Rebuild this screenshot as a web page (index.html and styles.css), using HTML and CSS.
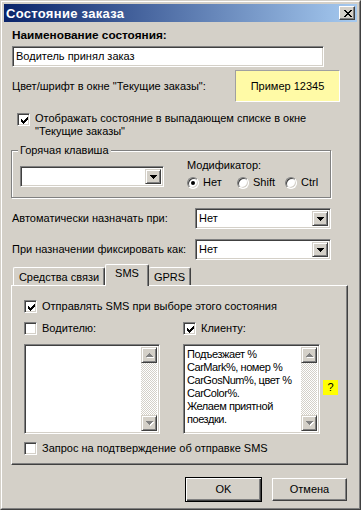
FILE: index.html
```html
<!DOCTYPE html>
<html lang="ru">
<head>
<meta charset="utf-8">
<title>Состояние заказа</title>
<link rel="stylesheet" href="styles.css">
</head>
<body>
<div class="window">
  <div class="frame">
    <div class="titlebar">
      <span class="title">Состояние заказа</span>
      <span class="close">
        <svg width="8" height="7" viewBox="0 0 8 7" shape-rendering="crispEdges"><path d="M0 0h2v1h1v1h2v-1h1v-1h2v1h-1v1h-1v1h-1v1h1v1h1v1h1v1h-2v-1h-1v-1h-2v1h-1v1h-2v-1h1v-1h1v-1h1v-1h-1v-1h-1z" fill="#000"/></svg>
      </span>
    </div>
    <div class="content">
      <div class="lbl-bold">Наименование состояния:</div>
      <div class="edit name-edit">Водитель принял заказ</div>

      <div class="color-row">
        <span>Цвет/шрифт в окне "Текущие заказы":</span>
        <div class="sample">Пример 12345</div>
      </div>

      <div class="check-row show-row">
        <span class="cb"><svg width="7" height="7" viewBox="0 0 7 7" shape-rendering="crispEdges"><path d="M6 0v1h-1v1h-1v1h-1v1h-1v-1h-1v-1h-1v3h1v1h1v1h1v-1h1v-1h1v-1h1v-1h1v-3z" fill="#000"/></svg></span>
        <span class="cb-text">Отображать состояние в выпадающем списке в окне<br>"Текущие заказы"</span>
      </div>

      <div class="group">
        <div class="legend">Горячая клавиша</div>
        <div class="combo hk-combo">
          <div class="combo-text"></div>
          <div class="combo-btn"><svg width="7" height="4" viewBox="0 0 7 4" shape-rendering="crispEdges"><path d="M0 0h7v1h-1v1h-1v1h-1v1h-1v-1h-1v-1h-1v-1h-1z" fill="#000"/></svg></div>
        </div>
        <div class="mods">
          <div class="mods-label">Модификатор:</div>
          <div class="radios">
            <span class="radio-item ri-1"><span class="radio on"></span><span>Нет</span></span>
            <span class="radio-item ri-2"><span class="radio"></span><span>Shift</span></span>
            <span class="radio-item"><span class="radio"></span><span>Ctrl</span></span>
          </div>
        </div>
      </div>

      <div class="field-row first-field">
        <span>Автоматически назначать при:</span>
        <div class="combo field-combo">
          <div class="combo-text">Нет</div>
          <div class="combo-btn"><svg width="7" height="4" viewBox="0 0 7 4" shape-rendering="crispEdges"><path d="M0 0h7v1h-1v1h-1v1h-1v1h-1v-1h-1v-1h-1v-1h-1z" fill="#000"/></svg></div>
        </div>
      </div>

      <div class="field-row second-field">
        <span>При назначении фиксировать как:</span>
        <div class="combo field-combo">
          <div class="combo-text">Нет</div>
          <div class="combo-btn"><svg width="7" height="4" viewBox="0 0 7 4" shape-rendering="crispEdges"><path d="M0 0h7v1h-1v1h-1v1h-1v1h-1v-1h-1v-1h-1v-1h-1z" fill="#000"/></svg></div>
        </div>
      </div>

      <div class="tabs">
        <div class="tab tab-1">Средства связи</div>
        <div class="tab tab-sel">SMS</div>
        <div class="tab tab-3">GPRS</div>
      </div>
      <div class="panel">
        <div class="check-row">
          <span class="cb"><svg width="7" height="7" viewBox="0 0 7 7" shape-rendering="crispEdges"><path d="M6 0v1h-1v1h-1v1h-1v1h-1v-1h-1v-1h-1v3h1v1h1v1h1v-1h1v-1h1v-1h1v-1h1v-3z" fill="#000"/></svg></span>
          <span class="cb-text">Отправлять SMS при выборе этого состояния</span>
        </div>
        <div class="cols">
          <div class="col">
            <div class="check-row">
              <span class="cb"></span>
              <span class="cb-text">Водителю:</span>
            </div>
            <div class="memo left-memo">
              <div class="memo-text"></div>
              <div class="vscroll">
                <div class="sbtn"><svg width="7" height="4" viewBox="0 0 7 4" shape-rendering="crispEdges"><path d="M3 0h1v1h1v1h1v1h1v1h-7v-1h1v-1h1v-1h1z" fill="#808080"/></svg></div>
                <div class="track"></div>
                <div class="sbtn"><svg width="7" height="4" viewBox="0 0 7 4" shape-rendering="crispEdges"><path d="M0 0h7v1h-1v1h-1v1h-1v1h-1v-1h-1v-1h-1v-1h-1z" fill="#808080"/></svg></div>
              </div>
            </div>
          </div>
          <div class="col right-col">
            <div class="check-row">
              <span class="cb"><svg width="7" height="7" viewBox="0 0 7 7" shape-rendering="crispEdges"><path d="M6 0v1h-1v1h-1v1h-1v1h-1v-1h-1v-1h-1v3h1v1h1v1h1v-1h1v-1h1v-1h1v-1h1v-3z" fill="#000"/></svg></span>
              <span class="cb-text">Клиенту:</span>
            </div>
            <div class="memo-wrap">
              <div class="memo right-memo">
                <div class="memo-text">Подъезжает %<br>CarMark%, номер %<br>CarGosNum%, цвет %<br>CarColor%.<br>Желаем приятной<br>поездки.</div>
                <div class="vscroll">
                  <div class="sbtn"><svg width="7" height="4" viewBox="0 0 7 4" shape-rendering="crispEdges"><path d="M3 0h1v1h1v1h1v1h1v1h-7v-1h1v-1h1v-1h1z" fill="#808080"/></svg></div>
                  <div class="track"></div>
                  <div class="sbtn"><svg width="7" height="4" viewBox="0 0 7 4" shape-rendering="crispEdges"><path d="M0 0h7v1h-1v1h-1v1h-1v1h-1v-1h-1v-1h-1v-1h-1z" fill="#808080"/></svg></div>
                </div>
              </div>
              <div class="help">?</div>
            </div>
          </div>
        </div>
        <div class="check-row confirm-row">
          <span class="cb"></span>
          <span class="cb-text">Запрос на подтверждение об отправке SMS</span>
        </div>
      </div>

      <div class="buttons">
        <div class="btn btn-default"><span>OK</span></div>
        <div class="btn">Отмена</div>
      </div>
    </div>
  </div>
</div>
</body>
</html>
```

FILE: styles.css
```css
html, body {
  margin: 0;
  padding: 0;
  background: #d4d0c8;
}

.window {
  width: 361px;
  height: 510px;
  box-sizing: border-box;
  border: 1px solid;
  border-color: #d4d0c8 #404040 #404040 #d4d0c8;
  font-family: "Liberation Sans", Arial, sans-serif;
  font-size: 11px;
  color: #000;
  background: #d4d0c8;
}

.frame {
  height: 100%;
  box-sizing: border-box;
  border: 1px solid;
  border-color: #fff #808080 #808080 #fff;
  padding: 2px;
  display: flex;
  flex-direction: column;
}

.titlebar {
  height: 18px;
  flex: none;
  display: flex;
  align-items: center;
  background: linear-gradient(to right, #0a246a, #a6caf0);
  padding: 0 2px 0 2px;
}

.title {
  color: #fff;
  font-weight: bold;
  font-size: 13px;
  letter-spacing: 0.3px;
  flex: 1;
}

.close {
  width: 16px;
  height: 14px;
  box-sizing: border-box;
  border: 1px solid;
  border-color: #fff #404040 #404040 #fff;
  box-shadow: inset -1px -1px #808080;
  background: #d4d0c8;
  display: flex;
  align-items: center;
  justify-content: center;
  padding-left: 1px;
}

.content {
  flex: 1;
  padding: 7px 0 0 8px;
  line-height: 13px;
}

.lbl-bold {
  font-weight: bold;
  font-size: 11.8px;
  height: 13px;
}

.edit {
  background: #fff;
  border: 1px solid;
  border-color: #808080 #fff #fff #808080;
  box-shadow: inset 1px 1px #404040, inset -1px -1px #d4d0c8;
  box-sizing: border-box;
}

.name-edit {
  margin-top: 4px;
  width: 312px;
  height: 21px;
  padding: 3px 0 0 3px;
  white-space: nowrap;
}

.color-row {
  margin-top: 3px;
  width: 328px;
  height: 32px;
  display: flex;
  align-items: center;
  justify-content: space-between;
}

.sample {
  width: 105px;
  height: 32px;
  box-sizing: border-box;
  background: #fffaa6;
  border: 1px solid;
  border-color: #a0a0a0 #fff #fff #a0a0a0;
  display: flex;
  align-items: center;
  justify-content: center;
}

.check-row {
  display: flex;
  align-items: flex-start;
  height: 13px;
}

.cb {
  width: 13px;
  height: 13px;
  flex: none;
  box-sizing: border-box;
  background: #fff;
  border: 1px solid;
  border-color: #808080 #fff #fff #808080;
  box-shadow: inset 1px 1px #404040, inset -1px -1px #d4d0c8;
  display: flex;
  align-items: center;
  justify-content: center;
  padding: 1px 0 0 1px;
}

.cb-text {
  margin-left: 5px;
  white-space: nowrap;
}

.show-row {
  margin-top: 10px;
  margin-left: 5px;
  height: 26px;
}

.show-row .cb {
  margin-top: 1px;
}

.group {
  position: relative;
  margin-top: 12px;
  margin-left: -1px;
  width: 320px;
  height: 48px;
  box-sizing: border-box;
  border: 1px solid #808080;
  box-shadow: inset 1px 1px #fff, 1px 1px #fff;
  display: flex;
  align-items: flex-start;
  padding-left: 8px;
}

.legend {
  position: absolute;
  left: 6px;
  top: -7px;
  padding: 0 2px;
  background: #d4d0c8;
}

.combo {
  display: flex;
  box-sizing: border-box;
  background: #fff;
  border: 1px solid;
  border-color: #808080 #fff #fff #808080;
  box-shadow: inset 1px 1px #404040, inset -1px -1px #d4d0c8;
  padding: 2px;
}

.combo-text {
  flex: 1;
  padding-left: 1px;
  line-height: 15px;
}

.combo-btn {
  width: 16px;
  box-sizing: border-box;
  background: #d4d0c8;
  border: 1px solid;
  border-color: #d4d0c8 #404040 #404040 #d4d0c8;
  box-shadow: inset 1px 1px #fff, inset -1px -1px #808080;
  display: flex;
  align-items: center;
  justify-content: center;
}

.hk-combo {
  margin-top: 15px;
  width: 144px;
  height: 21px;
}

.mods {
  margin-left: 23px;
  margin-top: 8px;
}

.radios {
  margin-top: 4px;
  display: flex;
  height: 13px;
}

.radio-item {
  display: flex;
  align-items: center;
  gap: 4px;
}

.ri-1 {
  width: 50px;
}

.ri-2 {
  width: 48px;
}

.radio {
  width: 12px;
  height: 12px;
  box-sizing: border-box;
  border-radius: 50%;
  background: #fff;
  border: 1px solid;
  border-color: #808080 #fff #fff #808080;
  box-shadow: inset 1px 1px #404040, inset -1px -1px #d4d0c8;
  display: flex;
  align-items: center;
  justify-content: center;
}

.radio.on::after {
  content: "";
  width: 4px;
  height: 4px;
  border-radius: 50%;
  background: #000;
}

.field-row {
  width: 319px;
  height: 21px;
  display: flex;
  align-items: center;
  justify-content: space-between;
}

.first-field {
  margin-top: 10px;
}

.second-field {
  margin-top: 10px;
}

.field-combo {
  width: 136px;
  height: 21px;
}

.tabs {
  margin-top: 4px;
  margin-left: -1px;
  padding-left: 2px;
  height: 21px;
  display: flex;
  align-items: flex-end;
}

.tab {
  height: 18px;
  box-sizing: border-box;
  background: #d4d0c8;
  border-top: 1px solid #fff;
  border-left: 1px solid #fff;
  border-right: 1px solid #404040;
  box-shadow: inset -1px 0 #808080;
  border-radius: 2px 2px 0 0;
  display: flex;
  justify-content: center;
  padding-top: 3px;
  white-space: nowrap;
}

.tab-1 {
  width: 92px;
}

.tab-sel {
  width: 44px;
  height: 22px;
  margin-bottom: -1px;
  position: relative;
  z-index: 1;
  padding-top: 2px;
}

.tab-3 {
  width: 42px;
  border-left: none;
}

.panel {
  margin-left: -1px;
  width: 337px;
  height: 180px;
  box-sizing: border-box;
  border: 1px solid;
  border-color: #fff #404040 #404040 #fff;
  box-shadow: inset -1px -1px #808080;
  padding: 14px 0 0 12px;
}

.cols {
  display: flex;
  margin-top: 9px;
}

.col {
  width: 136px;
}

.right-col {
  margin-left: 23px;
  width: auto;
}

.memo {
  margin-top: 9px;
  height: 90px;
  box-sizing: border-box;
  background: #fff;
  border: 1px solid;
  border-color: #808080 #fff #fff #808080;
  box-shadow: inset 1px 1px #404040, inset -1px -1px #d4d0c8;
  padding: 2px;
  display: flex;
}

.left-memo {
  width: 136px;
}

.right-memo {
  width: 137px;
}

.memo-wrap {
  display: flex;
  align-items: center;
}

.memo-wrap .help {
  margin-top: 6px;
}

.memo-text {
  flex: 1;
  padding: 1px 0 0 1px;
  white-space: nowrap;
  overflow: hidden;
  letter-spacing: -0.45px;
}

.vscroll {
  width: 16px;
  display: flex;
  flex-direction: column;
}

.sbtn {
  height: 16px;
  box-sizing: border-box;
  background: #d4d0c8;
  border: 1px solid;
  border-color: #d4d0c8 #404040 #404040 #d4d0c8;
  box-shadow: inset 1px 1px #fff, inset -1px -1px #808080;
  display: flex;
  align-items: center;
  justify-content: center;
}

.sbtn svg {
  filter: drop-shadow(1px 1px 0 #fff);
}

.track {
  flex: 1;
  background: repeating-conic-gradient(#fff 0 25%, #d4d0c8 0 50%) 0 0 / 2px 2px;
}

.help {
  margin-left: 3px;
  width: 15px;
  height: 15px;
  background: #ffff00;
  display: flex;
  align-items: center;
  justify-content: center;
  font-size: 11px;
}

.confirm-row {
  margin-top: 8px;
}

.buttons {
  margin-top: 13px;
  margin-left: 173px;
  display: flex;
  align-items: flex-start;
  gap: 10px;
}

.btn {
  width: 75px;
  height: 23px;
  box-sizing: border-box;
  background: #d4d0c8;
  border: 1px solid;
  border-color: #fff #404040 #404040 #fff;
  box-shadow: inset -1px -1px #808080;
  display: flex;
  align-items: center;
  justify-content: center;
}

.btn-default {
  width: 77px;
  height: 25px;
  margin-top: -1px;
  border: 1px solid #000;
  box-shadow: inset 1px 1px #fff, inset -1px -1px #404040, inset -2px -2px #808080;
}
```
